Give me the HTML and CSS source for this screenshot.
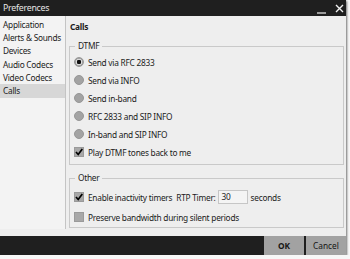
FILE: index.html
```html
<!DOCTYPE html>
<html lang="en">
<head>
  <meta charset="UTF-8">
  <title>Preferences</title>
  <link rel="stylesheet" href="styles.css">
</head>
<body>
  <div class="window">
    <div class="titlebar">
      <div class="title">Preferences</div>
      <div class="win-buttons">
        <span class="btn-min"></span>
        <svg class="btn-close" width="9" height="9" viewBox="0 0 9 9">
          <path d="M1 1 L8 8 M8 1 L1 8" stroke="#f2f2f2" stroke-width="1.4"/>
        </svg>
      </div>
    </div>

    <div class="content">
      <ul class="sidebar">
        <li>Application</li>
        <li>Alerts &amp; Sounds</li>
        <li>Devices</li>
        <li>Audio Codecs</li>
        <li>Video Codecs</li>
        <li class="selected">Calls</li>
      </ul>

      <div class="main">
        <h1 class="page-title">Calls</h1>

        <fieldset class="group dtmf">
          <legend>DTMF</legend>
          <div class="row"><span class="radio checked"></span>Send via RFC 2833</div>
          <div class="row"><span class="radio"></span>Send via INFO</div>
          <div class="row"><span class="radio"></span>Send in-band</div>
          <div class="row"><span class="radio"></span>RFC 2833 and SIP INFO</div>
          <div class="row"><span class="radio"></span>In-band and SIP INFO</div>
          <div class="row">
            <span class="check on">
              <svg width="10" height="10" viewBox="0 0 10 10"><path d="M2 5 L4.2 7.5 L8.3 2" fill="none" stroke="#000" stroke-width="1.7"/></svg>
            </span>Play DTMF tones back to me
          </div>
        </fieldset>

        <fieldset class="group other">
          <legend>Other</legend>
          <div class="row tall">
            <span class="check on">
              <svg width="10" height="10" viewBox="0 0 10 10"><path d="M2 5 L4.2 7.5 L8.3 2" fill="none" stroke="#000" stroke-width="1.7"/></svg>
            </span>Enable inactivity timers
            <span class="rtp">RTP Timer:</span>
            <span class="field">30</span>
            <span class="unit">seconds</span>
          </div>
          <div class="row tall"><span class="check"></span>Preserve bandwidth during silent periods</div>
        </fieldset>
      </div>
    </div>

    <div class="footer">
      <button class="btn ok">OK</button>
      <button class="btn">Cancel</button>
    </div>
  </div>
</body>
</html>
```

FILE: styles.css
```css
body {
  margin: 0;
  background-color: #f7f7f7;
  font-family: 'Noto Sans', 'Open Sans', sans-serif;
  font-size: 8.3px;
  letter-spacing: -0.25px;
  color: #1b1b1b;
}

.window {
  width: 346px;
  height: 255px;
  display: flex;
  flex-direction: column;
  background-color: #eeeeee;
  box-shadow: 1px 1px 2px rgba(0, 0, 0, 0.55);
}

/* ------BARRA DE TITULO------- */
.titlebar {
  height: 16px;
  background-color: #1f1f1f;
  display: flex;
  align-items: center;
  justify-content: space-between;
  padding: 0 2px 0 3px;
}

.title {
  color: #e6e6e6;
  font-size: 8.8px;
  line-height: 16px;
}

.win-buttons {
  display: flex;
  align-items: center;
  gap: 9px;
  height: 16px;
}

.btn-min {
  width: 9px;
  height: 2px;
  background-color: #9a9a9a;
  margin-top: 9px;
}

.btn-close {
  display: block;
}

/* ------CONTENIDO------- */
.content {
  flex: 1;
  display: flex;
}

.sidebar {
  list-style: none;
  margin: 0;
  padding: 1.7px 0 0 0;
  width: 65px;
  background-color: #f3f3f3;
  border-right: 1px solid #c4c4c4;
}

.sidebar li {
  height: 13.33px;
  line-height: 13.33px;
  padding-left: 3px;
  white-space: nowrap;
}

.sidebar li.selected {
  background-color: #d7d7d7;
}

.main {
  flex: 1;
  padding: 5px 2px 0 3px;
}

.page-title {
  margin: 0 0 7px 1px;
  font-size: 8.3px;
  line-height: 12px;
  font-weight: bold;
}

.group {
  margin: 0;
  border: 1px solid #c9c9c9;
  padding: 1px 0 3px 4px;
}

.group legend {
  padding: 0 3px;
  margin-left: 1px;
  line-height: 12px;
}

.group.other {
  margin-top: 7px;
  padding: 3px 0 0 4px;
}

.row {
  display: flex;
  align-items: center;
  height: 18px;
  white-space: nowrap;
}

.row.tall {
  height: 20px;
}

/* ------CONTROLES------- */
.radio {
  width: 10px;
  height: 10px;
  border-radius: 50%;
  background-color: #a3a3a3;
  box-sizing: border-box;
  border: 1px solid #979797;
  margin-right: 4px;
  flex: none;
}

.radio.checked {
  background: radial-gradient(circle, #111 0 2px, #d8d8d8 2.4px 3px, #a3a3a3 3.4px);
}

.check {
  width: 10px;
  height: 10px;
  background-color: #a8a8a8;
  box-sizing: border-box;
  border: 1px solid #9a9a9a;
  margin-right: 4px;
  flex: none;
  display: flex;
}

.check svg {
  margin: -1px;
}

.rtp {
  margin-left: 4px;
}

.field {
  width: 25px;
  height: 12px;
  line-height: 12px;
  background-color: #f4f4f4;
  border: 1px solid #c6c6c6;
  padding-left: 3px;
  margin-left: 2px;
}

.unit {
  margin-left: 3px;
}

/* ------PIE------- */
.footer {
  height: 19px;
  background-color: #1f1f1f;
  display: flex;
  justify-content: flex-end;
  gap: 2px;
  margin-top: 7px;
}

.btn {
  width: 40px;
  height: 19px;
  border: none;
  background-color: #a2a2a2;
  font-family: 'Noto Sans', 'Open Sans', sans-serif;
  font-size: 8.3px;
  color: #151515;
  padding: 0;
}

.btn.ok {
  font-weight: bold;
}
```
